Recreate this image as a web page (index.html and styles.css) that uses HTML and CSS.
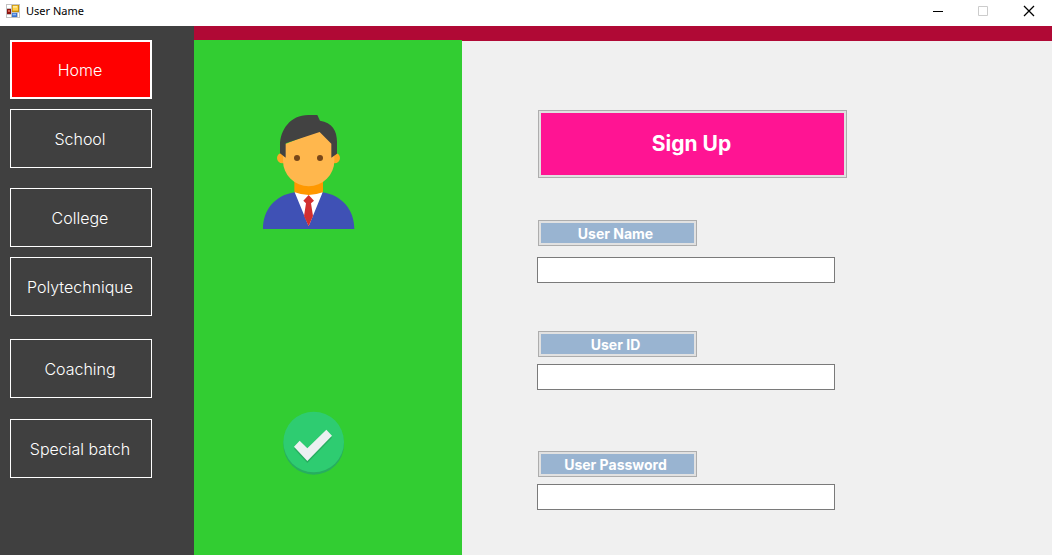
FILE: index.html
```
<!DOCTYPE html>
<html lang="en">
<head>
<meta charset="utf-8">
<title>User Name</title>
<link rel="stylesheet" href="styles.css">
</head>
<body>
<header class="titlebar">
  <svg class="app-icon" viewBox="0 0 42 42" aria-hidden="true">
    <path fill="#c3c3c3" d="M0 0h42v42H0z"/>
    <path fill="#fff" d="M3 3h12v9H3zM3 33h12v6H3zM36 27h3v12h-3z"/>
    <path fill="#c79008" d="M18 3h21v21H18z"/>
    <path fill="#ffd34d" d="M20 5h16v15H20z"/>
    <path fill="#ffeaa0" d="M21 6h12v5H21z"/>
    <path fill="#8c1512" d="M3 15h12v15H3z"/>
    <path fill="#d8604f" d="M6 18h6v6H6z"/>
    <path fill="#3a72cf" d="M18 27h15v12H18z"/>
    <path fill="#8db9f5" d="M20 29h10v5H20z"/>
  </svg>
  <h1 class="title">User Name</h1>
  <div class="window-controls">
    <button class="window-button" type="button" aria-label="Minimize"><svg viewBox="0 0 10 10"><path d="M1 5.5h10"/></svg></button>
    <button class="window-button" type="button" aria-label="Maximize" disabled><svg viewBox="0 0 10 10"><path d="M.5.5h9v9h-9z"/></svg></button>
    <button class="window-button" type="button" aria-label="Close"><svg viewBox="0 0 10 10"><path stroke-width="1.3" d="M0 0l10 10M10 0L0 10"/></svg></button>
  </div>
</header>
<div class="workspace">
  <nav class="sidebar">
    <div class="nav-group">
      <button class="nav-button active" type="button">Home</button>
      <button class="nav-button" type="button">School</button>
    </div>
    <div class="nav-group">
      <button class="nav-button" type="button">College</button>
      <button class="nav-button" type="button">Polytechnique</button>
    </div>
    <div class="nav-group spaced">
      <button class="nav-button" type="button">Coaching</button>
      <button class="nav-button" type="button">Special batch</button>
    </div>
  </nav>
  <div class="page">
    <div class="accent"></div>
    <div class="content">
      <aside class="profile">
        <svg class="avatar" viewBox="24 30 276 342" role="img" aria-label="User">
          <path fill="#ff9800" d="M118 220h86v50l-43 20-43-20z"/>
          <circle fill="#ffa726" cx="82" cy="159" r="16"/>
          <circle fill="#ffa726" cx="239" cy="159" r="16"/>
          <path fill="#ffb74d" d="M84 120L195 75l43 45v47a77 77 0 0 1-154 0z"/>
          <path fill="#424242" d="M160 30C106 30 75 75 75 120v25l17 13v-43l102-34 35 35v42l17-12v-35c0-35-15-58-51-64l-8-17z"/>
          <circle fill="#784719" cx="126" cy="159" r="9"/>
          <circle fill="#784719" cx="195" cy="159" r="9"/>
          <path fill="#fff" d="M119 262q42 16 84 0l-4 50-38 54-38-54z"/>
          <path fill="#3f51b5" d="M119 262C60 271 24 315 24 372h274c0-57-37-101-95-110l-42 102z"/>
          <path fill="#d32f2f" d="M161 270l16 17-9 8 6 38-13 31-14-31 6-38-8-8z"/>
        </svg>
        <svg class="check" viewBox="24 18 183 192" role="img" aria-label="Completed">
          <circle fill="#27ae60" cx="116" cy="118" r="91"/>
          <circle fill="#2ecc71" cx="116" cy="111" r="91"/>
          <path fill="#27ae60" d="M57 131l17-17 23 22 57-56 17 18-74 76z"/>
          <path fill="#ecf0f1" d="M57 125l17-18 23 23 57-56 17 18-74 76z"/>
        </svg>
      </aside>
      <form class="form">
        <button class="signup" type="button">Sign Up</button>
        <div class="field first">
          <label class="field-label" for="user-name">User Name</label>
          <input class="field-input" id="user-name" type="text">
        </div>
        <div class="field second">
          <label class="field-label" for="user-id">User ID</label>
          <input class="field-input" id="user-id" type="text">
        </div>
        <div class="field">
          <label class="field-label" for="user-password">User Password</label>
          <input class="field-input" id="user-password" type="password">
        </div>
      </form>
    </div>
  </div>
</div>
</body>
</html>
```
FILE: styles.css
```
* {
  box-sizing: border-box;
}

body {
  display: flex;
  flex-direction: column;
  min-height: 100vh;
  margin: 0;
  background: #f0f0f0;
  font-family: "Century Gothic", Inter, sans-serif;
}

.titlebar {
  display: flex;
  align-items: center;
  height: 26px;
  padding: 0 0 5px 6px;
  background: #fff;
}

.app-icon {
  width: 14px;
  height: 14px;
}

.title {
  margin: 0 0 0 6px;
  color: #000;
  font: 400 11px/20px "Segoe UI", "Noto Sans", sans-serif;
}

.window-controls {
  display: flex;
  margin-left: auto;
}

.window-button {
  display: flex;
  align-items: center;
  justify-content: center;
  width: 46px;
  height: 20px;
  padding: 0;
  border: 0;
  background: none;
}

.window-button svg {
  width: 10px;
  height: 10px;
  overflow: visible;
  fill: none;
  stroke: #000;
}

.window-button:disabled svg {
  stroke: #ccc;
}

.workspace {
  display: flex;
  flex: 1;
}

.sidebar {
  display: flex;
  flex-direction: column;
  gap: 20px;
  width: 194px;
  padding: 14px 42px 14px 10px;
  background: #404040;
}

.nav-group {
  display: flex;
  flex-direction: column;
  gap: 10px;
}

.nav-group.spaced {
  gap: 21px;
  margin-top: 3px;
}

.nav-button {
  height: 59px;
  padding: 0 2px 0 0;
  border: 1px solid #fff;
  background: #404040;
  color: #fff;
  font: 300 16px/20px "Century Gothic", Inter, sans-serif;
}

.nav-button.active {
  border-width: 2px;
  background: #f00;
}

.page {
  display: flex;
  flex: 1;
  flex-direction: column;
}

.accent {
  height: 14px;
  background: #b00935;
}

.content {
  display: flex;
  flex: 1;
}

.profile {
  display: flex;
  flex-direction: column;
  align-items: center;
  gap: 182px;
  width: 268px;
  padding: 75px 38px 0 0;
  background: #32cd32;
}

.avatar {
  width: 92px;
  height: 114px;
}

.check {
  width: 61px;
  height: 64px;
  margin-left: 9px;
}

.form {
  flex: 1;
  padding: 69px 75px 20px;
  border-top: 1px solid #b00935;
}

.signup,
.field-label {
  display: block;
  margin-left: 1px;
  border: 1px solid #adadad;
  box-shadow: inset 0 0 0 2px #e1e1e1;
  color: #fff;
  text-align: center;
}

.signup {
  width: 309px;
  height: 68px;
  padding: 0 2px 0 0;
  background: #ff1493;
  font: 700 21px/28px "Century Gothic", Inter, sans-serif;
}

.field {
  display: flex;
  flex-direction: column;
  gap: 7px;
  margin-top: 61px;
}

.field.first {
  gap: 11px;
  margin-top: 42px;
}

.field.second {
  margin-top: 48px;
}

.field-label {
  width: 159px;
  height: 26px;
  padding-right: 4px;
  background: #99b4d1;
  font-size: 14px;
  font-weight: 700;
  line-height: 25px;
}

.field-input {
  width: 298px;
  height: 26px;
  padding: 2px 4px;
  border: 1px solid #7a7a7a;
  background: #fff;
  font: 400 14px/20px "Century Gothic", Inter, sans-serif;
}
```
